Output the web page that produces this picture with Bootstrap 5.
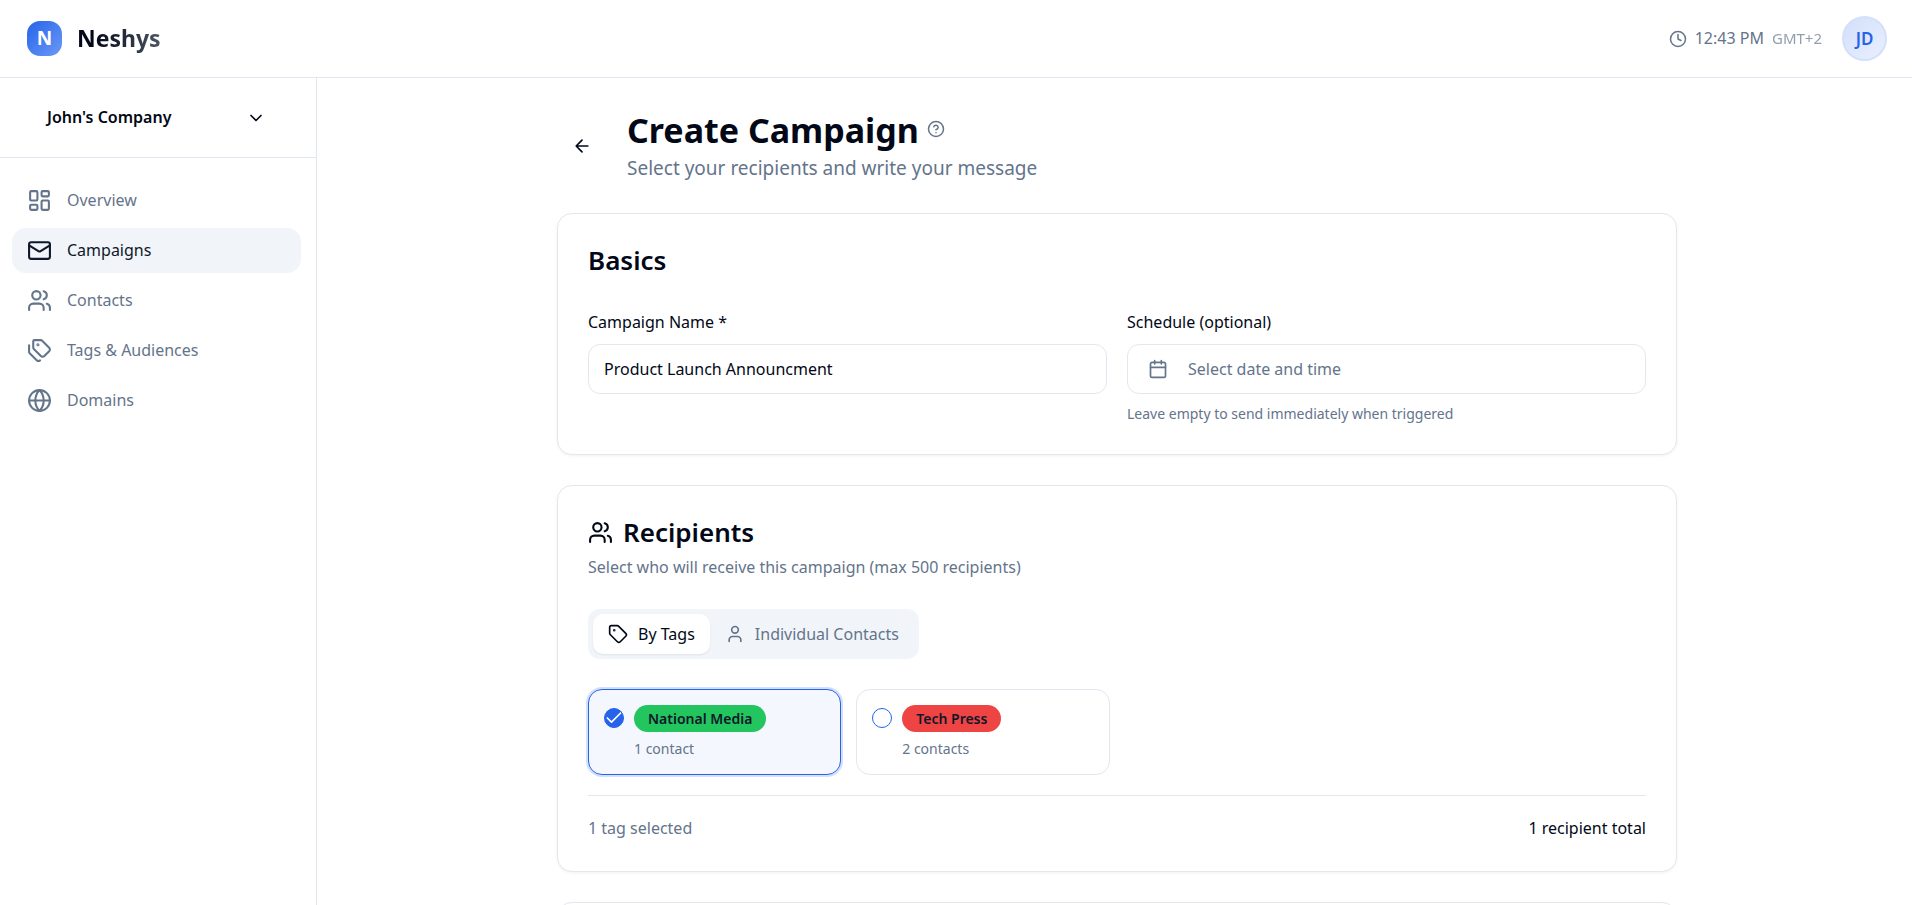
<!DOCTYPE html>
<html lang="en">
<head>
<meta charset="utf-8">
<meta name="viewport" content="width=device-width, initial-scale=1">
<title>Create Campaign - Neshys</title>
<link href="https://cdn.jsdelivr.net/npm/bootstrap@5.3.0/dist/css/bootstrap.min.css" rel="stylesheet">
<style>
  :root { --ink: #020817; --muted: #64748b; --line: #e2e8f0; --soft: #f1f5f9; --brand: #2563eb; }
  body { font-family: "Noto Sans", "Segoe UI", sans-serif; font-size: 16px; line-height: 25px; color: var(--ink); background: #fff; }
  .ico { fill: none; stroke: currentColor; stroke-width: 2; stroke-linecap: round; stroke-linejoin: round; flex: none; width: 20px; height: 20px; }
  .ico-sm { width: 18px; height: 18px; }
  .ico-lg { width: 25px; height: 25px; }
  .muted { color: var(--muted); }

  .topbar { height: 78px; padding: 0 25px 0 27px; border-bottom: 1px solid var(--line); }
  .brand-link { gap: 15px; }
  .brand-mark { width: 35px; height: 35px; border-radius: 13px; background: linear-gradient(135deg, #2563eb, #6b99f5); color: #fff; font-size: 19px; font-weight: 700; }
  .brand-name { font-size: 23px; font-weight: 700; line-height: 35px; background: linear-gradient(90deg, #020817 20%, #4b5563); -webkit-background-clip: text; background-clip: text; color: transparent; }
  .zone { font-size: 15px; opacity: .7; }
  .avatar { width: 45px; height: 45px; border: 2px solid #d3e0fb; background: linear-gradient(135deg, #d3e0fb, #e9effd); color: var(--brand); font-size: 17px; font-weight: 600; }

  .side { width: 317px; flex: none; border-right: 1px solid var(--line); }
  .side-head { padding: 17px 27px; border-bottom: 1px solid var(--line); }
  .company { height: 45px; padding: 0 23px 0 20px; border: 0; background: none; color: var(--ink); font-weight: 600; }
  .side-nav { padding: 20px 15px 20px 12px; gap: 5px; }
  .side-nav .nav-link { height: 45px; padding: 0 15px; gap: 15px; border-radius: 14px; color: var(--muted); font-size: 16px; }
  .side-nav .nav-link.active { background: var(--soft); color: #0f172a; }

  .content { min-width: 0; overflow-y: auto; scrollbar-width: none; padding: 30px 20px 0 25px; }
  .content::-webkit-scrollbar { display: none; }
  .sheet { max-width: 1120px; gap: 30px; }
  .page-head { gap: 20px; }
  .back { width: 50px; height: 50px; border: 0; background: none; color: var(--ink); }
  .page-title { font-size: 34px; font-weight: 700; line-height: 45px; }
  .page-sub { font-size: 19px; line-height: 30px; }

  .panel { padding: 30px; border: 1px solid var(--line); border-radius: 15px; box-shadow: 0 1px 3px rgba(15, 23, 42, .06); background: #fff; }
  .panel-last { min-height: 240px; }
  .panel-title { gap: 10px; font-size: 26px; font-weight: 600; line-height: 32px; }
  .panel-sub { margin: 7px 0 29px; }
  .fields { column-gap: 20px; margin-top: 34px; }
  .field { flex: 1 1 300px; min-width: 0; }
  .field label { display: block; margin-bottom: 9px; }
  .field .note { margin-top: 10px; }
  .box { height: 50px; padding: 0 15px; border: 1px solid var(--line); border-radius: 12px; font-size: 16px; color: var(--ink); background: #fff; }
  .date-box { padding: 0 20px; gap: 20px; color: var(--muted); }
  .note { font-size: 14px; line-height: 20px; }

  .switch { padding: 5px; border-radius: 12px; background: var(--soft); }
  .switch button { height: 40px; padding: 0 15px; gap: 10px; border: 0; border-radius: 10px; background: none; color: var(--muted); }
  .switch button.active { background: #fff; color: var(--ink); box-shadow: 0 1px 2px rgba(15, 23, 42, .08); }

  .tags { display: grid; grid-template-columns: repeat(auto-fill, minmax(240px, 1fr)); gap: 15px; margin-top: 30px; }
  .tag-card { padding: 15px; gap: 10px; border: 1px solid var(--line); border-radius: 14px; cursor: pointer; }
  .tag-card:has(:checked) { border-color: var(--brand); background: #f4f7fe; box-shadow: 0 0 0 2px rgba(37, 99, 235, .2); }
  .tag-body { gap: 7px; }
  .pick { appearance: none; width: 20px; height: 20px; margin: 3px 0 0; border: 1px solid var(--brand); border-radius: 50%; flex: none; background: center / 20px no-repeat #fff; }
  .pick:checked { background-color: var(--brand); background-image: url("data:image/svg+xml,%3Csvg xmlns='http://www.w3.org/2000/svg' viewBox='0 0 24 24' fill='none' stroke='white' stroke-width='2' stroke-linecap='round' stroke-linejoin='round'%3E%3Cpath d='M20 6 9 17l-5-5'/%3E%3C/svg%3E"); }
  .chip { height: 27px; padding: 0 14px; border-radius: 14px; font-size: 14px; font-weight: 600; line-height: 27px; color: #0f172a; }
  .chip-green { background: #22c55e; }
  .chip-red { background: #ef4444; }
  .totals { margin-top: 20px; padding-top: 20px; border-top: 1px solid var(--line); }
</style>
</head>
<body>
<div class="d-flex flex-column vh-100">
  <header class="topbar d-flex align-items-center justify-content-between flex-shrink-0">
    <a href="#" class="brand-link d-flex align-items-center text-decoration-none">
      <span class="brand-mark d-flex align-items-center justify-content-center">N</span>
      <span class="brand-name">Neshys</span>
    </a>
    <div class="d-flex align-items-center">
      <div class="d-flex align-items-center gap-2 muted me-3 pe-1">
        <svg class="ico ico-sm" viewBox="0 0 24 24"><circle cx="12" cy="12" r="10"/><path d="M12 6v6l4 2"/></svg>
        <span>12:43 PM</span>
        <span class="zone">GMT+2</span>
      </div>
      <button type="button" class="avatar rounded-circle p-0">JD</button>
    </div>
  </header>

  <div class="d-flex flex-grow-1 overflow-hidden">
    <aside class="side">
      <div class="side-head">
        <button type="button" class="company w-100 d-flex align-items-center justify-content-between">
          <span>John's Company</span>
          <svg class="ico" viewBox="0 0 24 24"><path d="m6 9 6 6 6-6"/></svg>
        </button>
      </div>
      <nav class="side-nav nav flex-column">
        <a href="#" class="nav-link d-flex align-items-center">
          <svg class="ico ico-lg" viewBox="0 0 24 24"><rect x="3" y="3" width="7" height="9" rx="1"/><rect x="14" y="3" width="7" height="5" rx="1"/><rect x="14" y="12" width="7" height="9" rx="1"/><rect x="3" y="16" width="7" height="5" rx="1"/></svg>
          Overview
        </a>
        <a href="#" class="nav-link active d-flex align-items-center" aria-current="page">
          <svg class="ico ico-lg" viewBox="0 0 24 24"><rect x="2" y="4" width="20" height="16" rx="2"/><path d="m22 7-8.97 5.7a1.94 1.94 0 0 1-2.06 0L2 7"/></svg>
          Campaigns
        </a>
        <a href="#" class="nav-link d-flex align-items-center">
          <svg class="ico ico-lg" viewBox="0 0 24 24"><path d="M16 21v-2a4 4 0 0 0-4-4H6a4 4 0 0 0-4 4v2"/><circle cx="9" cy="7" r="4"/><path d="M22 21v-2a4 4 0 0 0-3-3.87M16 3.13a4 4 0 0 1 0 7.75"/></svg>
          Contacts
        </a>
        <a href="#" class="nav-link d-flex align-items-center">
          <svg class="ico ico-lg" viewBox="0 0 24 24"><path d="M13.172 2a2 2 0 0 1 1.414.586l6.71 6.71a2.4 2.4 0 0 1 0 3.408l-4.592 4.592a2.4 2.4 0 0 1-3.408 0l-6.71-6.71A2 2 0 0 1 6 9.172V3a1 1 0 0 1 1-1z"/><path d="M2 7v6.172a2 2 0 0 0 .586 1.414l6.71 6.71a2.4 2.4 0 0 0 3.191.193"/><circle cx="10.5" cy="6.5" r=".5" fill="currentColor"/></svg>
          Tags &amp; Audiences
        </a>
        <a href="#" class="nav-link d-flex align-items-center">
          <svg class="ico ico-lg" viewBox="0 0 24 24"><circle cx="12" cy="12" r="10"/><path d="M12 2a14.5 14.5 0 0 0 0 20 14.5 14.5 0 0 0 0-20M2 12h20"/></svg>
          Domains
        </a>
      </nav>
    </aside>

    <main class="content flex-grow-1">
      <div class="sheet mx-auto d-flex flex-column">
        <div class="page-head d-flex align-items-center">
          <button type="button" class="back d-flex align-items-center justify-content-center" aria-label="Back"><svg class="ico" viewBox="0 0 24 24"><path d="m12 19-7-7 7-7M19 12H5"/></svg></button>
          <div>
            <div class="d-flex align-items-center gap-2">
              <h1 class="page-title mb-0">Create Campaign</h1>
              <svg class="ico ico-sm muted mb-1" viewBox="0 0 24 24"><circle cx="12" cy="12" r="10"/><path d="M9.09 9a3 3 0 0 1 5.83 1c0 2-3 3-3 3M12 17h.01"/></svg>
            </div>
            <p class="page-sub muted mb-0">Select your recipients and write your message</p>
          </div>
        </div>

        <section class="panel">
          <h2 class="panel-title mb-0">Basics</h2>
          <div class="fields d-flex flex-wrap">
            <div class="field">
              <label for="campaign-name">Campaign Name *</label>
              <input id="campaign-name" type="text" class="box w-100 d-block" value="Product Launch Announcment">
            </div>
            <div class="field">
              <label for="schedule">Schedule (optional)</label>
              <button id="schedule" type="button" class="box date-box w-100 d-flex align-items-center">
                <svg class="ico" viewBox="0 0 24 24"><path d="M8 2v4M16 2v4M3 10h18"/><rect x="3" y="4" width="18" height="18" rx="2"/></svg>
                Select date and time
              </button>
              <p class="note muted mb-0">Leave empty to send immediately when triggered</p>
            </div>
          </div>
        </section>

        <section class="panel">
          <h2 class="panel-title mb-0 d-flex align-items-center">
            <svg class="ico ico-lg" viewBox="0 0 24 24"><path d="M16 21v-2a4 4 0 0 0-4-4H6a4 4 0 0 0-4 4v2"/><circle cx="9" cy="7" r="4"/><path d="M22 21v-2a4 4 0 0 0-3-3.87M16 3.13a4 4 0 0 1 0 7.75"/></svg>
            Recipients
          </h2>
          <p class="panel-sub muted">Select who will receive this campaign (max 500 recipients)</p>
          <div class="switch d-inline-flex">
            <button type="button" class="active d-flex align-items-center">
              <svg class="ico" viewBox="0 0 24 24"><path d="M12.586 2.586A2 2 0 0 0 11.172 2H4a2 2 0 0 0-2 2v7.172a2 2 0 0 0 .586 1.414l8.704 8.704a2.426 2.426 0 0 0 3.42 0l6.58-6.58a2.426 2.426 0 0 0 0-3.42z"/><circle cx="7.5" cy="7.5" r=".5" fill="currentColor"/></svg>
              By Tags
            </button>
            <button type="button" class="d-flex align-items-center">
              <svg class="ico" viewBox="0 0 24 24"><path d="M19 21v-2a4 4 0 0 0-4-4H9a4 4 0 0 0-4 4v2"/><circle cx="12" cy="7" r="4"/></svg>
              Individual Contacts
            </button>
          </div>
          <div class="tags">
            <label class="tag-card d-flex align-items-start" for="tag-national">
              <input id="tag-national" type="checkbox" class="pick" checked>
              <span class="tag-body d-flex flex-column align-items-start">
                <span class="chip chip-green">National Media</span>
                <span class="note muted">1 contact</span>
              </span>
            </label>
            <label class="tag-card d-flex align-items-start" for="tag-tech">
              <input id="tag-tech" type="checkbox" class="pick">
              <span class="tag-body d-flex flex-column align-items-start">
                <span class="chip chip-red">Tech Press</span>
                <span class="note muted">2 contacts</span>
              </span>
            </label>
          </div>
          <div class="totals d-flex justify-content-between">
            <span class="muted">1 tag selected</span>
            <span>1 recipient total</span>
          </div>
        </section>

        <section class="panel panel-last"></section>
      </div>
    </main>
  </div>
</div>
<script src="https://cdn.jsdelivr.net/npm/bootstrap@5.3.0/dist/js/bootstrap.bundle.min.js"></script>
</body>
</html>
